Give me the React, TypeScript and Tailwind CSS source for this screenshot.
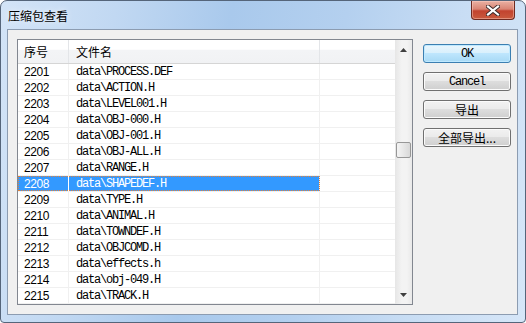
import React from "react";

const ROWS = [
  ["2201", "data\\PROCESS.DEF"],
  ["2202", "data\\ACTION.H"],
  ["2203", "data\\LEVEL001.H"],
  ["2204", "data\\OBJ-000.H"],
  ["2205", "data\\OBJ-001.H"],
  ["2206", "data\\OBJ-ALL.H"],
  ["2207", "data\\RANGE.H"],
  ["2208", "data\\SHAPEDEF.H"],
  ["2209", "data\\TYPE.H"],
  ["2210", "data\\ANIMAL.H"],
  ["2211", "data\\TOWNDEF.H"],
  ["2212", "data\\OBJCOMD.H"],
  ["2213", "data\\effects.h"],
  ["2214", "data\\obj-049.H"],
  ["2215", "data\\TRACK.H"],
];

const SELECTED = "2208";

const cjk = "font-['Noto_Sans_CJK_SC','Liberation_Sans',sans-serif]";
const mono = "font-['Liberation_Mono',monospace] text-[12px] tracking-[-1.2px]";
const num = "font-['Liberation_Sans',sans-serif] text-[12px] tracking-[-0.4px]";

function CloseButton() {
  return (
    <div className="mr-[10px] flex h-[19px] w-[44px] items-center justify-center rounded-b-[4px] border border-t-0 border-[#6e2a21] bg-[linear-gradient(180deg,#eab1a3_0%,#d98474_45%,#c2432f_55%,#c95a3e_100%)] shadow-[inset_0_0_0_1px_rgba(255,210,200,0.45)]">
      <svg width="14" height="11" viewBox="0 0 14 11">
        <path d="M2 1.5 L12 9.5 M12 1.5 L2 9.5" stroke="#3b2a2a" strokeWidth="4" strokeLinecap="square" />
        <path d="M2 1.5 L12 9.5 M12 1.5 L2 9.5" stroke="#ffffff" strokeWidth="2.2" strokeLinecap="square" />
      </svg>
    </div>
  );
}

function Arrow({ up }: { up: boolean }) {
  return (
    <svg width="7" height="4" viewBox="0 0 7 4">
      <path d={up ? "M0 4 L3.5 0 L7 4 Z" : "M0 0 L7 0 L3.5 4 Z"} fill="#404040" />
    </svg>
  );
}

function Scrollbar() {
  return (
    <div className="flex w-[17px] flex-col bg-[linear-gradient(90deg,#e6e6e6_0%,#f3f3f3_40%,#f3f3f3_70%,#e9e9e9_100%)]">
      <div className="flex h-[17px] items-center justify-center pt-[2px]">
        <Arrow up />
      </div>
      <div className="h-[85px]" />
      <div className="ml-[1px] h-[16px] w-[15px] rounded-[2px] border border-[#979797] bg-[linear-gradient(90deg,#f4f4f4_0%,#e7e7e7_50%,#d8d8d8_100%)]" />
      <div className="flex-1" />
      <div className="flex h-[17px] items-center justify-center pb-[2px]">
        <Arrow up={false} />
      </div>
    </div>
  );
}

function Row({ id, name }: { id: string; name: string }) {
  const sel = id === SELECTED;
  return (
    <div className="flex h-[16px] border-b border-[#f0f0f0]">
      <div
        className={`flex ${sel ? "bg-[#3399ff] text-white outline-1 outline-dotted outline-offset-[-1px] outline-[#e0803a]" : "text-black"}`}
      >
        <div className={`flex w-[51px] items-center border-r pl-[6px] ${num} ${sel ? "border-white" : "border-[#f0f0f0]"}`}>
          {id}
        </div>
        <div className={`flex w-[251px] items-center border-r border-[#f0f0f0] pl-[7px] ${mono}`}>
          {name}
        </div>
      </div>
      <div className="w-[75px]" />
    </div>
  );
}

function Button({ children, primary }: { children: React.ReactNode; primary?: boolean }) {
  return (
    <div
      className={`flex h-[19px] w-[88px] items-center justify-center rounded-[3px] border text-[12px] leading-none text-black ${
        primary
          ? "border-[#3c7fb1] bg-[linear-gradient(180deg,#eaf6fd_0%,#d9f0fc_45%,#bee6fd_50%,#a7d9f5_100%)] shadow-[inset_0_0_0_1px_#bfe9ff]"
          : "border-[#707070] bg-[linear-gradient(180deg,#f2f2f2_0%,#ebebeb_45%,#dddddd_50%,#cfcfcf_100%)] shadow-[inset_0_0_0_1px_#fbfbfb]"
      }`}
    >
      {children}
    </div>
  );
}

export default function App() {
  return (
    <div className="flex h-[323px] w-[526px] flex-col overflow-hidden rounded-t-[7px] rounded-b-[4px] border border-[#55657a] bg-[linear-gradient(100deg,#d3e4f7_0%,#c1d8f2_20%,#a9c9ec_40%,#b4d0ef_60%,#c8ddf4_80%,#d6e6f8_100%)]">
      {/* title bar */}
      <div className="flex h-[28px] shrink-0 items-start justify-between">
        <div className={`pl-[7px] pt-[7px] text-[12px] leading-[15px] text-black ${cjk} [text-shadow:0_0_6px_rgba(255,255,255,0.9)]`}>
          压缩包查看
        </div>
        <CloseButton />
      </div>

      {/* client area */}
      <div className="pl-[6px] pr-[7px]">
        <div className="flex h-[286px] border border-[#8c9cb1] bg-[#f0f0f0] pl-[9px] pt-[9px]">
          {/* list view */}
          <div className="flex h-[266px] w-[396px] border border-[#828790] bg-white">
            <div className="flex w-[377px] flex-col">
              <div className={`flex h-[24px] border-b border-[#d5d5d5] bg-[linear-gradient(180deg,#ffffff_0%,#ffffff_40%,#f3f4f6_45%,#f1f2f4_100%)] text-[12px] text-black ${cjk}`}>
                <div className="flex w-[51px] items-center border-r border-[#e3e5e8] pl-[6px] pt-[1px]">序号</div>
                <div className="flex w-[251px] items-center border-r border-[#e3e5e8] pl-[7px] pt-[1px]">文件名</div>
                <div className="w-[75px]" />
              </div>
              {ROWS.map(([id, name]) => (
                <Row key={id} id={id} name={name} />
              ))}
            </div>
            <Scrollbar />
          </div>

          {/* buttons */}
          <div className="ml-[10px] mt-[5px] flex flex-col gap-[9px]">
            <Button primary>
              <span className={mono}>OK</span>
            </Button>
            <Button>
              <span className={mono}>Cancel</span>
            </Button>
            <Button>
              <span className={cjk}>导出</span>
            </Button>
            <Button>
              <span className={cjk}>全部导出...</span>
            </Button>
          </div>
        </div>
      </div>
    </div>
  );
}
